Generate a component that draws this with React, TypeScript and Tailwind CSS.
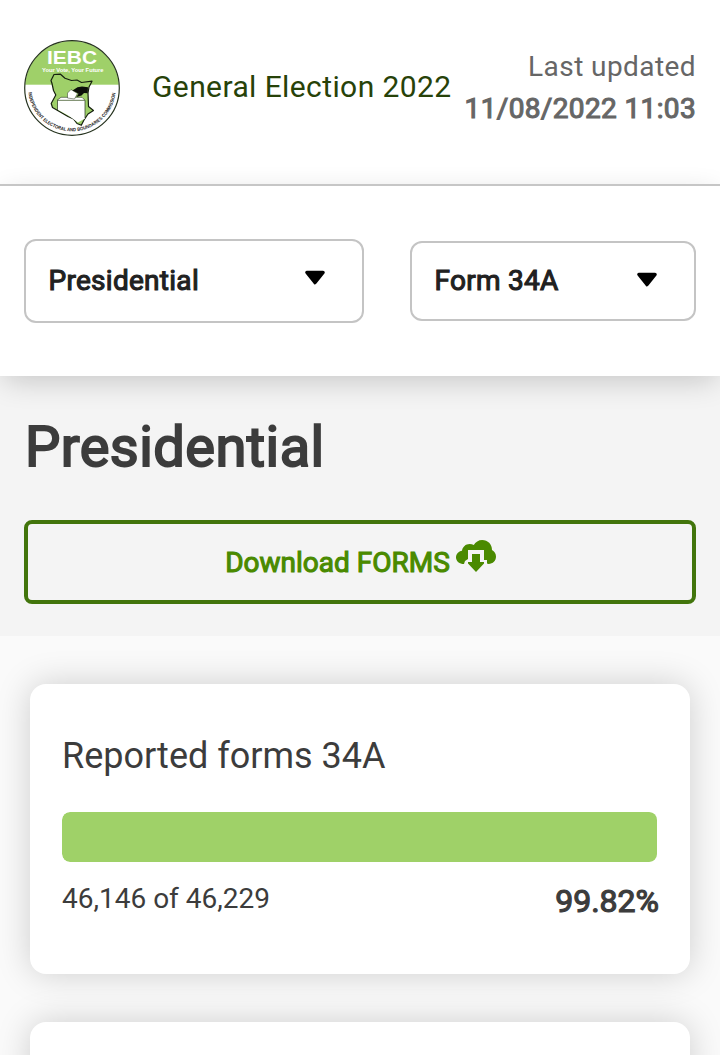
import { clsx } from "clsx";

function Logo() {
  return (
    <svg viewBox="0 0 96 96" className="size-24 shrink-0" role="img" aria-label="IEBC">
      <defs>
        <path id="ring" d="M4.4 52.5A43.9 43.9 0 0 0 91.6 52.5" />
        <clipPath id="disc">
          <circle cx="48" cy="48" r="47" />
        </clipPath>
      </defs>
      <circle cx="48" cy="48" r="47" fill="#fff" />
      <rect width="96" height="44.7" fill="#9fd069" clipPath="url(#disc)" />
      <circle cx="48" cy="48" r="47.3" fill="none" stroke="#26331f" strokeWidth="1.2" />
      <text x="23" y="24" textLength="50" lengthAdjust="spacingAndGlyphs" fill="#fff" className="font-['Liberation_Sans',sans-serif] text-[17.5px] font-bold">
        IEBC
      </text>
      <text x="18" y="32" textLength="61.5" lengthAdjust="spacingAndGlyphs" fill="#fff" className="font-['Liberation_Sans',sans-serif] text-[5.8px] font-bold">
        Your Vote, Your Future
      </text>
      {/* country outline */}
      <path
        d="M30 34.5L36.5 34.2L41 38.3L47.5 40.5L53 40L57.5 42.5L68 41.2L65 47L64 53L64.5 66.5L69.5 70.5L64 74L60 80L57.3 85.3L53 83.5L49.5 79L44 76.5L28.5 67.5L27.2 63.5L31.8 55L29.5 50.5L28 43.5L27 40.5Z"
        fill="#9fd069"
        stroke="#16200f"
        strokeWidth="1.2"
        strokeLinejoin="round"
      />
      {/* ballot box */}
      <path d="M33.5 60.5H61V78.5L54 82.5L45 76L33.5 69.5Z" fill="#fff" />
      <path d="M33 60.3L37 57.3H58L61 60.3Z" fill="#fff" stroke="#26331f" strokeWidth=".6" />
      <path d="M33.5 60.5V70M61 60.5V78" fill="none" stroke="#26331f" strokeWidth=".7" />
      <path d="M43.5 58V53L47 49.5L53.5 53.5L50.5 59Z" fill="#fff" stroke="#26331f" strokeWidth=".5" />
      <path d="M48.5 50.5L53.5 47.2L58 46.5L64 47.2L63.7 53.2L60 53L57.5 55.5L52.5 57L54.5 53.7L51.5 52Z" fill="#0c0f0a" />
      <text fill="#222" className="font-['Liberation_Sans',sans-serif] text-[4.8px] font-bold">
        <textPath href="#ring" textLength="127" lengthAdjust="spacingAndGlyphs">
          INDEPENDENT ELECTORAL AND BOUNDARIES COMMISSION
        </textPath>
      </text>
    </svg>
  );
}

function Caret({ className }: { className?: string }) {
  return (
    <svg viewBox="0 0 22 16" className={clsx("h-4 w-[22px]", className)}>
      <path d="M3 2.5H19L11 12.5Z" stroke="#000" strokeWidth="3.6" strokeLinejoin="round" />
    </svg>
  );
}

function CloudDownload({ className }: { className?: string }) {
  return (
    <svg viewBox="0 0 40 32" className={clsx("h-8 w-10", className)} fill="#4a8a00">
      <path d="M8 24C3.5 24 0 21.3 0 17.5C0 14 2.6 11.4 6 10.8C6.6 6.8 9.6 4 13.6 4C15.2 4 16.6 4.3 17.8 5C19.4 2 22.6 0 26.2 0C31.8 0 36 4.3 36 9.9C38.5 11.3 40 13.6 40 16.6C40 20.8 37 24 32.5 24L31 23.6L31 20H28V10H12V19L9 21Z" />
      <path d="M16 14H24V22H28V23.5L20 32L12 23.5V22H16Z" />
    </svg>
  );
}

export default function App() {
  const reported = 46146;
  const total = 46229;
  const percent = (reported / total) * 100;

  return (
    <div className="h-[1055px] w-full overflow-hidden bg-[#fafafa] font-[Roboto,sans-serif] text-[#3c3c3c]">
      <header className="flex h-46 items-center bg-white px-6 pb-2">
        <Logo />
        <h1 className="mb-0.5 ml-8 text-[30px] leading-9 tracking-[0.4px] whitespace-nowrap text-[#274209]">General Election 2022</h1>
        <div className="ml-auto text-right text-[28px] leading-[42px] whitespace-nowrap text-[#666]">
          <p className="tracking-[0.42px]">Last updated</p>
          <p className="tracking-[0.36px] [-webkit-text-stroke:1.1px_#666]">11/08/2022 11:03</p>
        </div>
      </header>

      <nav className="relative flex h-48 items-center justify-between border-t-2 border-[#c6c6c6] bg-white px-6 text-[28px] tracking-[0.28px] text-[#212121] shadow-[0_8px_28px_-4px_rgba(0,0,0,0.2)]">
        <button className="flex h-21 w-[340px] items-center justify-between rounded-xl border-2 border-[#c4c4c4] pr-9 pl-[22.5px]">
          <span className="[-webkit-text-stroke:1.1px_#212121]">Presidential</span>
          <Caret className="mb-1.5" />
        </button>
        <button className="flex h-20 w-[286px] items-center justify-between rounded-xl border-2 border-[#c4c4c4] pr-9 pl-[22.5px]">
          <span className="[-webkit-text-stroke:1.1px_#212121]">Form 34A</span>
          <Caret className="mb-0.5" />
        </button>
      </nav>

      <section className="h-65 bg-[#f4f4f4] px-6 pt-9">
        <h2 className="pt-0.5 pl-px text-[56px] leading-[66px] tracking-[0.45px] [-webkit-text-stroke:2px_#3c3c3c]">Presidential</h2>
        <button className="mt-10 flex h-21 w-full items-center justify-center gap-1.5 rounded-lg border-4 border-[#42750c] pl-px text-[28px] text-[#4a8a00]">
          <span className="pt-0.5 [-webkit-text-stroke:1.1px_#4a8a00]">Download FORMS</span>
          <CloudDownload className="mb-3" />
        </button>
      </section>

      <main className="flex flex-col gap-12 px-[30px] pt-12">
        <article className="h-[290px] rounded-2xl bg-white px-8 pt-12 shadow-[0_0_34px_rgba(0,0,0,0.18)]">
          <h3 className="text-4xl leading-12">Reported forms 34A</h3>
          <div className="mt-8 h-[50px] overflow-hidden rounded-lg">
            <div className="h-full rounded-lg bg-[#9fd168]" style={{ width: `${percent}%` }} />
          </div>
          <div className="mt-4 flex items-start justify-between">
            <span className="text-[28px] leading-[42px]">
              {reported.toLocaleString("en-US")} of {total.toLocaleString("en-US")}
            </span>
            <span className="-mr-px text-[32px] leading-[46px] [-webkit-text-stroke:1.2px_#3c3c3c]">{percent.toFixed(2)}%</span>
          </div>
        </article>
        <article className="h-[290px] shrink-0 rounded-2xl bg-white shadow-[0_0_34px_rgba(0,0,0,0.18)]" />
      </main>
    </div>
  );
}
